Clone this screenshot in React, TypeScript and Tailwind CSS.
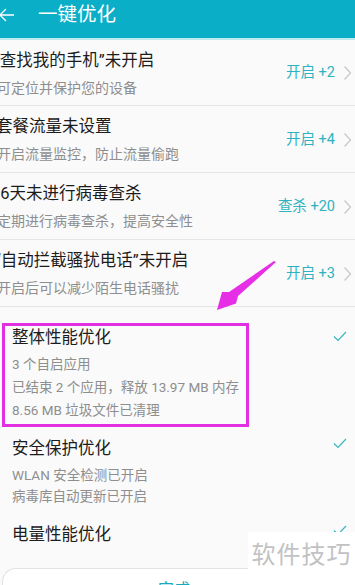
import React from "react";

const FONT = { fontFamily: "Roboto, 'Noto Sans CJK SC', sans-serif" };

function Chevron() {
  return (
    <svg width="9" height="16" viewBox="0 0 9 16" className="shrink-0">
      <path d="M1.5 1.5 L7.5 8 L1.5 14.5" fill="none" stroke="#c9c9c9" strokeWidth="1.3" />
    </svg>
  );
}

function Check() {
  return (
    <svg width="14" height="11" viewBox="0 0 14 11">
      <path d="M1 5.5 L5 9.5 L13 1" fill="none" stroke="#3ab7c4" strokeWidth="1.2" />
    </svg>
  );
}

type Row = { title: string; sub: string; action: string; titleMl: string };

const rows: Row[] = [
  { title: "“查找我的手机”未开启", sub: "可定位并保护您的设备", action: "开启 +2", titleMl: "-ml-[6px]" },
  { title: "套餐流量未设置", sub: "开启流量监控，防止流量偷跑", action: "开启 +4", titleMl: "-ml-[4px]" },
  { title: "36天未进行病毒查杀", sub: "定期进行病毒查杀，提高安全性", action: "查杀 +20", titleMl: "-ml-[9px]" },
  { title: "“自动拦截骚扰电话”未开启", sub: "开启后可以减少陌生电话骚扰", action: "开启 +3", titleMl: "-ml-[5px]" },
];

export default function App() {
  return (
    <div className="relative w-[355px] h-[585px] overflow-hidden bg-[#fafafa]" style={FONT}>
      {/* Header */}
      <div className="h-[38px] pb-[9px] bg-[#0aaec6] flex items-center">
        <svg width="16" height="16" viewBox="0 0 16 16" className="ml-[-1px]">
          <path d="M1 8 H15 M7 2 L1 8 L7 14" fill="none" stroke="#ffffff" strokeWidth="1.3" />
        </svg>
        <span className="ml-[23px] text-[19.5px] leading-[24px] text-white">一键优化</span>
      </div>
      <div className="h-[2px] bg-[#bfeaf0]" />

      {/* Issue rows */}
      <div>
        {rows.map((r, i) => (
          <div
            key={i}
            className={`flex items-center border-b border-[#e6e6e6] ${i === 0 ? "h-[66px]" : "h-[67px]"}`}
          >
            <div className="flex-1 self-start pt-[10px] min-w-0">
              <div className={`text-[16.5px] leading-[22px] text-[#1c1c1c] whitespace-nowrap ${r.titleMl}`}>
                {r.title}
              </div>
              <div className="mt-[7px] -ml-[3px] text-[14px] leading-[18px] text-[#8e8e8e] whitespace-nowrap">
                {r.sub}
              </div>
            </div>
            <div className="flex items-center mt-[1px]">
              <span className="text-[14.5px] leading-[20px] text-[#2db2c1]">{r.action}</span>
              <span className="ml-[8px] mr-[3px]">
                <Chevron />
              </span>
            </div>
          </div>
        ))}
      </div>

      {/* Optimized section */}
      <div className="flex items-start mt-[16px]">
        <div className="ml-[2px] w-[247px] border-[3px] border-[#e22fe2] pl-[7px] pb-[4px]">
          <div className="mt-[1px] text-[16.5px] leading-[22px] text-[#1c1c1c]">整体性能优化</div>
          <div className="mt-[5px] text-[13.5px] leading-[20px] text-[#8e8e8e]">3 个自启应用</div>
          <div className="mt-[3px] text-[13.5px] leading-[20px] text-[#8e8e8e] whitespace-nowrap">
            已结束 2 个应用，释放 13.97 MB 内存
          </div>
          <div className="mt-[3px] text-[13.5px] leading-[20px] text-[#8e8e8e]">8.56 MB 垃圾文件已清理</div>
        </div>
        <div className="ml-auto mr-[8px] mt-[8px]">
          <Check />
        </div>
      </div>

      <div className="flex items-start mt-[11px]">
        <div className="ml-[12px]">
          <div className="text-[16.5px] leading-[22px] text-[#1c1c1c]">安全保护优化</div>
          <div className="mt-[5px] text-[13.5px] leading-[20px] text-[#8e8e8e]">WLAN 安全检测已开启</div>
          <div className="mt-[1px] text-[13.5px] leading-[20px] text-[#8e8e8e]">病毒库自动更新已开启</div>
        </div>
        <div className="ml-auto mr-[8px] mt-[0px]">
          <Check />
        </div>
      </div>

      <div className="flex items-start mt-[18px]">
        <div className="ml-[12px] text-[16.5px] leading-[22px] text-[#1c1c1c]">电量性能优化</div>
        <div className="ml-auto mr-[8px] mt-[1px]">
          <Check />
        </div>
      </div>

      {/* Bottom button card */}
      <div className="mt-[22px] ml-[2px] h-[40px] bg-white border-t border-l border-[#e2e2e2] rounded-tl-[14px] flex justify-center">
        <span className="mt-[10px] ml-[-10px] text-[16px] leading-[22px] text-[#18a9bd]">完成</span>
      </div>

      {/* Watermark */}
      <div className="absolute left-[248px] top-[532px] w-[107px] h-[53px] bg-white flex items-start justify-center">
        <span className="mt-[8px] text-[24px] leading-[30px] text-[#c2c2c2] tracking-[1px]">软件技巧</span>
      </div>

      {/* Annotation arrow */}
      <svg className="absolute left-0 top-0" width="355" height="585" viewBox="0 0 355 585">
        <path
          d="M276 262 L238 296 L236 303.5 L217 310 L222 292 L229 292 L274 261 Z"
          fill="#e52ee5"
        />
      </svg>
    </div>
  );
}
